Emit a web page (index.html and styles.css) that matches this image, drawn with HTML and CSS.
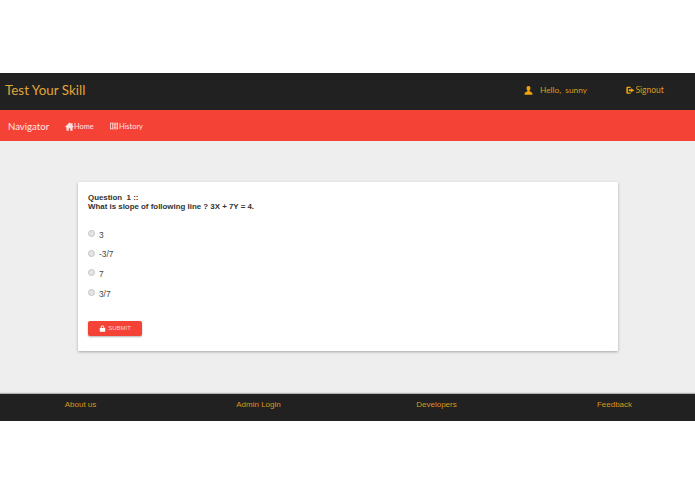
FILE: index.html
```html
<!DOCTYPE html>
<html lang="en">
<head>
<meta charset="utf-8">
<title>Test Your Skill</title>
<link rel="stylesheet" href="styles.css">
</head>
<body>
<header class="top">
  <div class="brand">Test Your Skill</div>
  <div class="hello">
    <svg class="ico-user" viewBox="0 0 12 12"><path fill="currentColor" d="M6 0C4.300 0 3.400 1.200 3.400 3c0 1.300.5 2.400 1.200 3v1.100L1.500 8.600C1 8.900.8 9.500.8 11.500h10.400c0-2-.2-2.600-.7-2.900L7.400 7.100V6c.7-.6 1.200-1.700 1.200-3C8.600 1.200 7.700 0 6 0z"/></svg>
    <span class="hello-text">Hello,&nbsp; sunny</span>
  </div>
  <div class="signout">
    <svg class="ico-out" viewBox="0 0 12 12"><path fill="currentColor" d="M1.800 1H6.500v1.800H2.700v6.400h3.800V11H1.800C1 11 .5 10.500.5 9.700V2.300C.5 1.500 1 1 1.800 1z"/><path fill="currentColor" d="M7 3l4.800 3L7 9V7.300H4V4.700h3z"/></svg>
    <span>Signout</span>
  </div>
</header>
<nav class="nav">
  <span class="nav-title">Navigator</span>
  <a class="nav-link home">
    <svg class="ico-nav" viewBox="0 0 12 12"><path fill="currentColor" d="M6 .5L.3 6.200l1 1 .7-.6v4.900h3V8.200h2v3.300h3V6.600l.7.6 1-1L10 4.500V1.400H8.300v1.400z"/></svg>Home
  </a>
  <a class="nav-link">
    <svg class="ico-book" viewBox="0 0 12 12"><path fill="currentColor" fill-rule="evenodd" d="M0 1h12v10H0zM1.200 2.200v7.600h2V2.200zM4.200 2.200v7.600h6.600V2.200zM5.200 3.500h4.600v1.200H5.200zM5.200 5.500h4.600v1.200H5.200zM5.200 7.500h4.600v1.200H5.200z"/></svg>History
  </a>
</nav>
<main class="main">
  <section class="card">
    <p class="question">Question&nbsp; 1 ::<br>What is slope of following line ? 3X + 7Y = 4.</p>
    <form class="options">
      <label class="option"><input type="radio" name="a"><span>3</span></label>
      <label class="option"><input type="radio" name="a"><span>-3/7</span></label>
      <label class="option"><input type="radio" name="a"><span>7</span></label>
      <label class="option"><input type="radio" name="a"><span>3/7</span></label>
    </form>
    <button class="submit" type="button">
      <svg class="ico-lock" viewBox="0 0 12 12"><path fill="currentColor" d="M2 5h1V3.500C3 1.800 4.300.8 6 .8s3 1 3 2.700V5h1c.4 0 .7.300.7.700v5c0 .4-.3.700-.7.700H2c-.4 0-.7-.3-.7-.7v-5c0-.4.300-.7.700-.7zM4.500 5h3V3.500C7.500 2.600 6.900 2.200 6 2.200s-1.500.4-1.500 1.300z"/></svg>SUBMIT
    </button>
  </section>
</main>
<footer class="foot">
  <a>About us</a>
  <a>Admin Login</a>
  <a>Developers</a>
  <a>Feedback</a>
</footer>
</body>
</html>
```
FILE: styles.css
```css
* { box-sizing: border-box; }
html, body { margin: 0; background: #fff; }
body { padding-top: 73px; font-family: "Liberation Sans", Arial, sans-serif; overflow-x: hidden; }
svg { display: block; flex: none; }

.top {
  height: 37px;
  background: #212121;
  display: flex;
  align-items: center;
  padding: 0 0 3px 5px;
}
.brand {
  font-family: Lato, sans-serif;
  font-size: 13.400px;
  color: #e0a63a;
  width: 519px;
}
.hello {
  display: flex;
  align-items: center;
  font-family: Lato, sans-serif;
  font-size: 8.300px;
  width: 102px;
  color: #f0a30a;
}
.ico-user { width: 9px; height: 9px; margin-right: 7px; }
.hello-text { color: #d99a1c; }
.signout {
  display: flex;
  align-items: center;
  gap: 1px;
  font-family: Lato, sans-serif;
  font-size: 8.500px;
  color: #d99a1c;
}
.ico-out { width: 8.500px; height: 8.500px; color: #f0a30a; }

.nav {
  height: 31px;
  background: #f44336;
  display: flex;
  align-items: center;
  padding: 1px 0 0 8px;
  font-family: Lato, sans-serif;
}
.nav-title { font-size: 9.600px; width: 57px; color: #fde3e0; }
.nav-link {
  display: flex;
  align-items: center;
  font-size: 7.400px;
  color: #fde3e0;
}
.home { width: 45px; }
.ico-nav { width: 9px; height: 9px; }
.ico-book { width: 8px; height: 8px; margin-right: 1px; }

.main {
  height: 253px;
  background: #eeeeee;
  padding: 41px 77px 0 78px;
}
.card {
  height: 169px;
  background: #fff;
  box-shadow: 0 1px 3px rgba(0, 0, 0, 0.3);
  padding: 11px 10px;
  border-radius: 1px;
}
.question {
  margin: 0;
  font-size: 7.900px;
  line-height: 9px;
  font-weight: bold;
  color: #333;
}
.options {
  margin-top: 14px;
  display: flex;
  flex-direction: column;
}
.option {
  height: 19.600px;
  display: flex;
  align-items: center;
  font-size: 8.300px;
  color: #444;
}
.option input {
  appearance: none;
  width: 7px;
  height: 7px;
  margin: -2px 4px 0 0;
  border-radius: 50%;
  background: #e4e4e4;
  border: 1px solid #c4c4c4;
}
.submit {
  margin-top: 17.500px;
  width: 54px;
  height: 15px;
  padding: 0;
  border: 0;
  border-radius: 2px;
  background: #f44336;
  box-shadow: 0 1px 2px rgba(0, 0, 0, 0.3);
  color: #fbd0cb;
  font-family: "Liberation Sans", Arial, sans-serif;
  font-size: 6px;
  display: flex;
  align-items: center;
  justify-content: center;
  gap: 2px;
}
.ico-lock { width: 7px; height: 7px; color: #fff; }

.foot {
  height: 27px;
  padding-bottom: 6px;
  background: #212121;
  box-shadow: 0 -1px 1px rgba(0, 0, 0, 0.25);
  display: grid;
  grid-template-columns: repeat(4, 178px);
  justify-content: center;
  align-items: center;
  justify-items: center;
  font-size: 8px;
  color: #d9961a;
  position: relative;
}
```
